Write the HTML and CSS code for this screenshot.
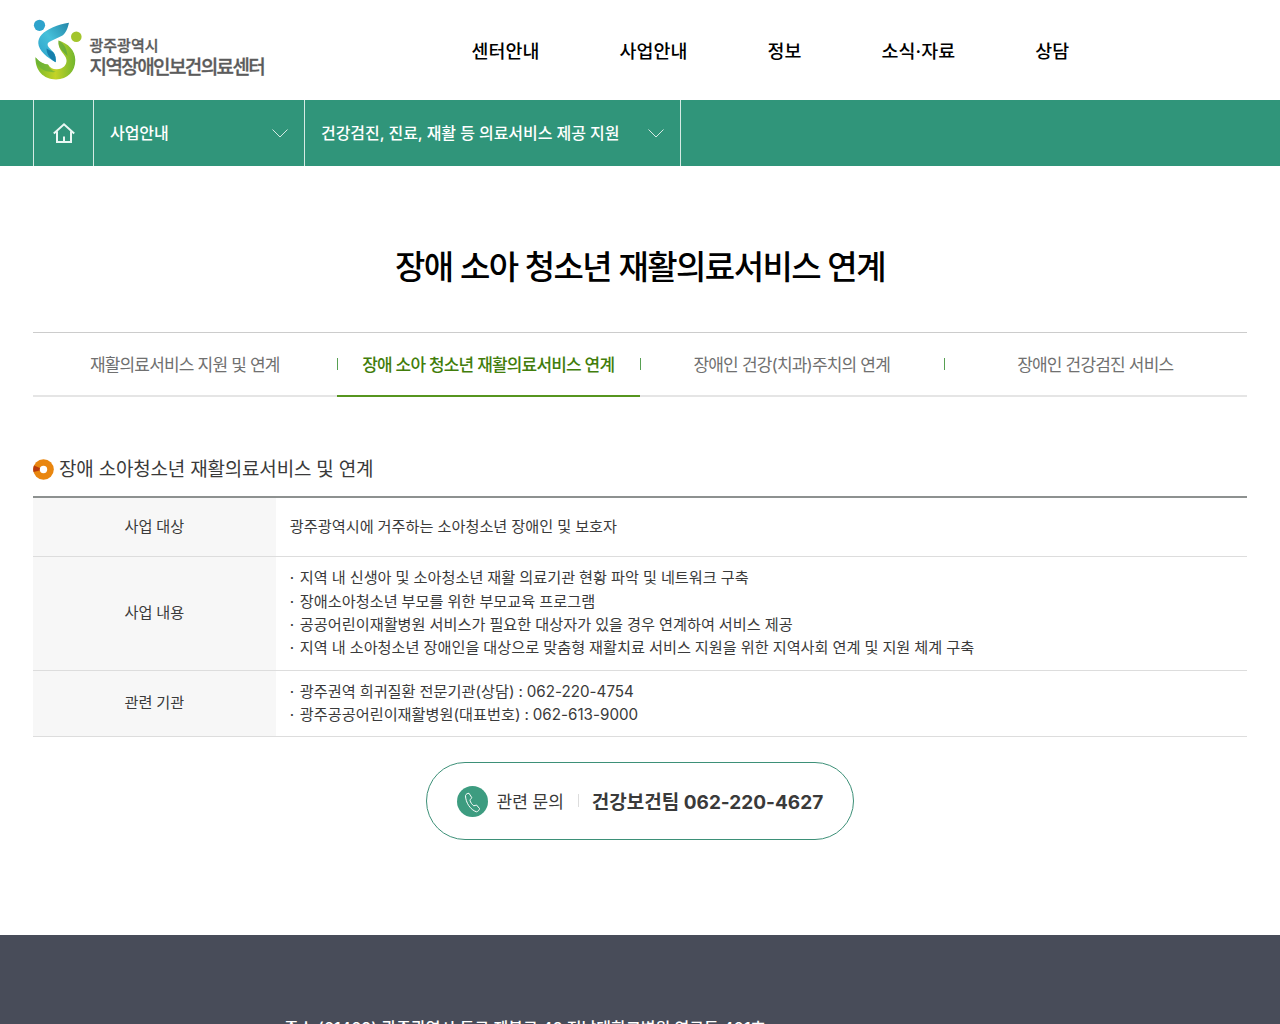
FILE: index.html
```html
<!doctype html>
<html lang="ko">

<head>
    <meta charset="utf-8">
    <title>장애 소아 청소년 재활의료서비스 연계</title>
    <meta name="viewport" content="width=device-width, initial-scale=1">
    <link rel="stylesheet" href="styles.css">
</head>

<body>
    <header class="header">
        <a class="logo" href="#">
            <svg class="logo-mark" viewBox="0 0 50 62" width="50" height="62">
                <defs>
                    <linearGradient id="blue" x1="0" y1="1" x2="1" y2="0">
                        <stop offset="0" stop-color="#2a9fc8"/>
                        <stop offset=".5" stop-color="#45c0da"/>
                        <stop offset="1" stop-color="#2386a8"/>
                    </linearGradient>
                    <linearGradient id="green" x1="0" y1="0" x2="1" y2="0">
                        <stop offset="0" stop-color="#76b82c"/>
                        <stop offset=".5" stop-color="#c3d326"/>
                        <stop offset="1" stop-color="#72b62f"/>
                    </linearGradient>
                </defs>
                <circle cx="6.500" cy="6.300" r="5.600" fill="#2ea3cc"/>
                <circle cx="43.300" cy="17.800" r="5.300" fill="#a3c52c"/>
                <path fill="url(#blue)" d="M36 3.700C30 4.500 25 6 20 8.300C10 12.500 5 18 5.300 24.300C5.500 32 15 39 22.700 43.300C23 39 22.500 36.500 21 34L15.500 28C13.800 25.500 14.500 23.800 17 22.500L28.500 17C32.500 15 34.500 10 36 3.700Z"/>
                <path fill="#167fac" d="M13.500 29.500L20 33C22.500 36 23 39 22.700 43.300C17 40 13.500 35 13.500 29.500Z"/>
                <path fill="url(#green)" d="M25.500 21.500C35 24.500 42.300 31 42.300 41C42.300 52.500 34.500 60.400 23 60.400C10.500 60.400 2 51.500 2.500 38.300C6 42.500 11 45.500 15 45.500C17.500 49 20 50.500 24 50.300C30 50 34 46 33.500 41C33 35 24.500 32 25.500 21.500Z"/>
                <path fill="#5fae3c" opacity=".6" d="M2.500 38.300C6 42.500 11 45.500 15 45.500C16 49 19 52 23 53C12 54 3 49 2.500 38.300Z"/>
                <path fill="#4ba044" opacity=".6" d="M25.500 21.500C31 24 34 30 34.500 37C31 33 24.500 30 25.500 21.500Z"/>
            </svg>
            <span class="logo-text">
                <span class="logo-city">광주광역시</span>
                <span class="logo-name">지역장애인보건의료센터</span>
            </span>
        </a>
        <nav class="gnb">
            <a href="#">센터안내</a>
            <a href="#">사업안내</a>
            <a href="#">정보</a>
            <a href="#">소식·자료</a>
            <a href="#">상담</a>
        </nav>
    </header>

    <div class="location">
        <div class="location-inner">
            <a class="home" href="#">
                <svg viewBox="0 0 22 22" width="22" height="22" fill="none" stroke="#e9f7f3" stroke-width="2">
                    <path d="M.8 11.500L11 2.300L21.200 11.500M4 9.500V20H18V9.500M11 14.500V20"/>
                </svg>
            </a>
            <a class="depth depth-first" href="#">
                <span>사업안내</span>
                <svg class="arrow" viewBox="0 0 16 9" width="16" height="9"><path d="M.5 .5L8 8L15.500 .5"/></svg>
            </a>
            <a class="depth depth-second" href="#">
                <span>건강검진, 진료, 재활 등 의료서비스 제공 지원</span>
                <svg class="arrow" viewBox="0 0 16 9" width="16" height="9"><path d="M.5 .5L8 8L15.500 .5"/></svg>
            </a>
        </div>
    </div>

    <main class="content">
        <h1>장애 소아 청소년 재활의료서비스 연계</h1>

        <ul class="tabs">
            <li><a href="#">재활의료서비스 지원 및 연계</a></li>
            <li class="on"><a href="#">장애 소아 청소년 재활의료서비스 연계</a></li>
            <li><a href="#">장애인 건강(치과)주치의 연계</a></li>
            <li><a href="#">장애인 건강검진 서비스</a></li>
        </ul>

        <h2>
            <svg viewBox="0 0 21 21" width="21" height="21">
                <circle cx="10.500" cy="10.500" r="10.300" fill="#e9860f"/>
                <path d="M10.500 10.500L1 6.500A10.300 10.300 0 0 0 .5 13Z" fill="#b93a0c"/>
                <circle cx="10.500" cy="10.500" r="3.700" fill="#fff"/>
            </svg>
            <span>장애 소아청소년 재활의료서비스 및 연계</span>
        </h2>

        <table class="info">
            <tr class="row-target">
                <th>사업 대상</th>
                <td>광주광역시에 거주하는 소아청소년 장애인 및 보호자</td>
            </tr>
            <tr class="row-detail">
                <th>사업 내용</th>
                <td>
                    <ul>
                        <li>지역 내 신생아 및 소아청소년 재활 의료기관 현황 파악 및 네트워크 구축</li>
                        <li>장애소아청소년 부모를 위한 부모교육 프로그램</li>
                        <li>공공어린이재활병원 서비스가 필요한 대상자가 있을 경우 연계하여 서비스 제공</li>
                        <li>지역 내 소아청소년 장애인을 대상으로 맞춤형 재활치료 서비스 지원을 위한 지역사회 연계 및 지원 체계 구축</li>
                    </ul>
                </td>
            </tr>
            <tr class="row-agency">
                <th>관련 기관</th>
                <td>
                    <ul>
                        <li>광주권역 희귀질환 전문기관(상담) : 062-220-4754</li>
                        <li>광주공공어린이재활병원(대표번호) : 062-613-9000</li>
                    </ul>
                </td>
            </tr>
        </table>

        <div class="contact">
            <svg viewBox="0 0 31 31" width="31" height="31">
                <circle cx="15.500" cy="15.500" r="15.500" fill="#3d9c80"/>
                <path fill="none" stroke="#fff" stroke-linejoin="round" d="M8.500 9.500C9 8 10.500 7.300 12 7.300L14.700 11.500C14.700 12.500 13 13.300 13 14.300C13.500 16.500 15 18.500 16.800 19.800C17.800 20 18.500 19 19.500 19L22.500 22.500C22.500 24 21 25.500 19.500 25.800C13.500 24 8.500 16.500 8.500 9.500Z"/>
            </svg>
            <span class="contact-label">관련 문의</span>
            <strong>건강보건팀 062-220-4627</strong>
        </div>
    </main>

    <footer class="footer">
        <address>주소 (61469) 광주광역시 동구 제봉로 42 전남대학교병원 연구동 401호</address>
    </footer>
</body>

</html>
```
FILE: styles.css
```css
* {
    box-sizing: border-box;
    margin: 0;
    padding: 0;
}

html {
    height: 100%;
    overflow: hidden;
}

body {
    height: 1024px;
    overflow: hidden;
    background: #fff;
    color: #3a3a3a;
    font-family: Inter, "Noto Sans CJK KR", sans-serif;
    font-size: 15px;
    white-space: nowrap;
}

a {
    color: inherit;
    text-decoration: none;
}

ul {
    list-style: none;
}

svg {
    display: block;
    flex: none;
}

.header {
    display: flex;
    height: 100px;
    padding-left: 33px;
}

.logo {
    display: flex;
    width: 438.5px;
    padding-top: 19px;
}

.logo-text {
    display: flex;
    flex-direction: column;
    padding: 17px 0 0 6.5px;
    color: #5b5b5b;
    font-weight: 500;
    -webkit-text-stroke: .3px #5b5b5b;
}

.logo-city {
    font-size: 15px;
    line-height: 19px;
}

.logo-name {
    font-size: 19px;
    line-height: 25px;
    letter-spacing: -1.6px;
}

.gnb {
    display: flex;
    gap: 80px;
    color: #000;
    font-size: 18.4px;
    font-weight: 500;
    line-height: 102px;
    letter-spacing: .08px;
}

.location {
    height: 66px;
    background: #30957a;
    color: #fff;
}

.location-inner {
    display: flex;
    height: 100%;
    margin-left: 33px;
    border-left: 1px solid #d5eae4;
}

.home {
    display: flex;
    align-items: center;
    width: 60px;
    padding-left: 18.5px;
    border-right: 1px solid #d5eae4;
}

.depth {
    display: flex;
    align-items: center;
    justify-content: space-between;
    padding: 0 16.5px 0 16px;
    border-right: 1px solid #d5eae4;
    font-size: 16px;
    font-weight: 500;
    letter-spacing: -.06px;
}

.depth span {
    padding-bottom: 2px;
}

.depth-first {
    width: 211px;
}

.depth-second {
    width: 376px;
}

.arrow {
    fill: none;
    stroke: #d5eae4;
}

.content {
    height: 769px;
    padding: 76px 33px 0;
}

h1 {
    height: 90px;
    color: #000;
    font-size: 33px;
    font-weight: 500;
    line-height: 50px;
    letter-spacing: -1.55px;
    text-align: center;
}

.tabs {
    display: grid;
    grid-template-columns: repeat(4, 1fr);
    height: 65px;
    border-top: 1px solid #ccc;
    color: #707070;
    font-size: 17px;
    line-height: 60px;
    letter-spacing: -.82px;
    text-align: center;
}

.tabs li {
    display: flex;
    align-items: center;
    border-bottom: 2px solid #e5e5e5;
}

.tabs li + li::before {
    width: 1px;
    height: 12px;
    margin-right: -1px;
    background: #57a052;
    content: "";
}

.tabs a {
    flex: 1;
    padding-top: 2px;
}

.tabs .on {
    border-color: #56951f;
    color: #427d0b;
    font-weight: 500;
}

h2 {
    display: flex;
    align-items: center;
    gap: 5px;
    height: 99px;
    padding-top: 45px;
    font-size: 19px;
    font-weight: 400;
    letter-spacing: -.2px;
}

h2 span {
    padding-bottom: 3px;
}

.info {
    width: 100%;
    border-top: 2px solid #8d9190;
    border-collapse: separate;
    border-spacing: 0;
    font-size: 15.2px;
    line-height: 23.4px;
    word-spacing: -.3px;
}

.info th {
    width: 20%;
    padding-bottom: 1px;
    border-bottom: 1px solid #ddd;
    background: #f7f7f7;
    font-weight: 400;
}

.info td {
    padding: 0 0 1px 14px;
    border-bottom: 1px solid #ddd;
}

.info li::before {
    display: inline-block;
    width: 10px;
    content: "·";
}

.row-target {
    height: 59px;
}

.row-detail {
    height: 114px;
}

.row-agency {
    height: 66px;
}

.contact {
    display: flex;
    align-items: center;
    width: 428px;
    height: 78px;
    margin: 25px auto 0;
    padding-left: 30px;
    border: 1px solid #3d9078;
    border-radius: 39px;
    font-size: 17px;
}

.contact-label {
    display: flex;
    align-items: center;
    padding: 0 0 2px 8.5px;
}

.contact-label::after {
    width: 1px;
    height: 13px;
    margin: 0 13px 0 14px;
    background: #ddd;
    content: "";
}

.contact strong {
    padding-bottom: 2px;
    font-size: 19px;
    font-weight: 700;
}

.footer {
    height: 89px;
    padding: 80px 0 0 284px;
    overflow: hidden;
    background: #484c59;
    color: #fff;
}

.footer address {
    font-size: 16px;
    font-style: normal;
    font-weight: 500;
    line-height: 26px;
    letter-spacing: .04px;
}
```
